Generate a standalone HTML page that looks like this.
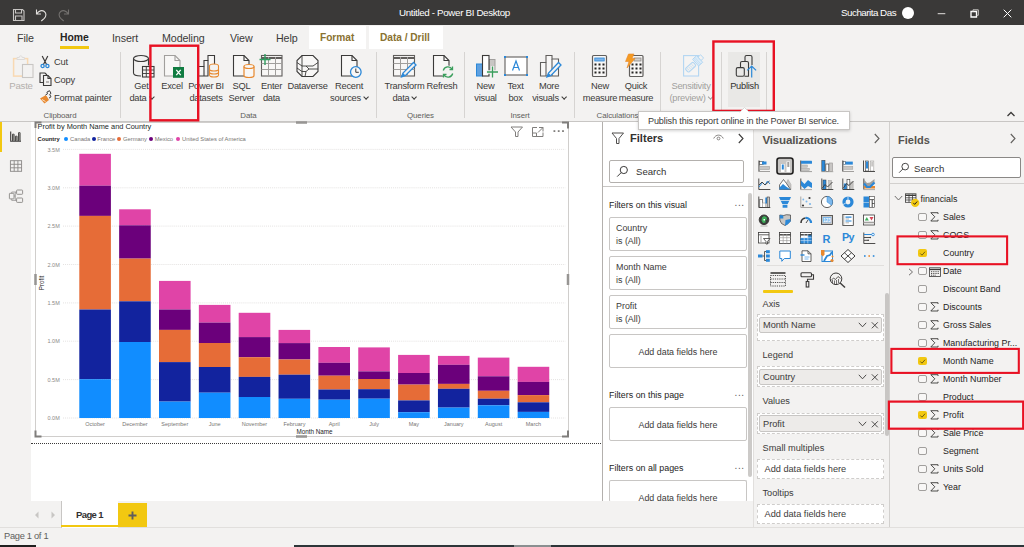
<!DOCTYPE html>
<html><head><meta charset="utf-8">
<style>
*{box-sizing:border-box;margin:0;padding:0}
html,body{width:1024px;height:547px;overflow:hidden;background:#f3f2f1;font-family:"Liberation Sans",sans-serif;color:#252423}
.a{position:absolute}
.t{position:absolute;white-space:nowrap;line-height:1}
svg{position:absolute;overflow:visible}
#title{left:0;top:0;width:1024px;height:25.5px;background:#3a3938}
#ribbon{left:0;top:25px;width:1024px;height:97px;background:#f3f2f1}
.tab{font-size:10.7px;color:#3b3a39;top:32.5px;letter-spacing:-0.1px}
.tabb{font-size:10.2px;font-weight:bold;top:33px;letter-spacing:-0.05px}
.rl{font-size:9.3px;letter-spacing:-0.25px;color:#3b3a39;text-align:center;line-height:12.3px;white-space:nowrap;position:absolute;transform:translateX(-50%);top:80px}
.rs{font-size:9.3px;letter-spacing:-0.2px;color:#3b3a39;position:absolute;white-space:nowrap;line-height:1}
.gl{font-size:7.9px;letter-spacing:-0.1px;color:#605e5c;position:absolute;top:111.700px;transform:translateX(-50%);white-space:nowrap;line-height:1}
.sep{position:absolute;top:52px;width:1px;height:66px;background:#d6d4d2}
.red{position:absolute;border:2.4px solid #e2142d}
.dis{color:#a19f9d}
.chev{display:inline-block;width:4px;height:4px;border-right:1px solid #3b3a39;border-bottom:1px solid #3b3a39;transform:rotate(45deg);margin-left:3px;position:relative;top:-2px}
.xl{top:421.600px;font-size:5.5px;color:#777573;transform:translateX(-50%)}
.yl{left:47.500px;font-size:5.5px;color:#8a8886}
.fh{left:609px;font-size:8.9px;color:#252423}
.fc{position:absolute;left:609px;width:138px;height:34px;border:1px solid #c8c6c4;border-radius:2px;background:#fff;font-size:8.9px;color:#3b3a39;padding:3.5px 0 0 6px;line-height:13.4px;white-space:nowrap}
.fa{position:absolute;left:609px;width:138px;height:34px;border:1px solid #c8c6c4;border-radius:2px;background:#fff;font-size:8.9px;color:#3b3a39;text-align:center;line-height:33px;white-space:nowrap;overflow:hidden}
.wl{left:762.5px;font-size:9.2px;color:#3b3a39}
.fl{font-size:8.85px;color:#252423}
</style></head><body>
<!-- TITLE BAR -->
<div class="a" id="title"></div>
<div class="t" style="left:399px;top:8.400px;font-size:9.800px;letter-spacing:-0.350px;color:#fff">Untitled - Power BI Desktop</div>
<div class="t" style="left:841px;top:8.400px;font-size:9.800px;letter-spacing:-0.500px;color:#fff">Sucharita Das</div>
<div class="a" style="left:902px;top:7px;width:12px;height:12px;border-radius:50%;background:#fff"></div>
<svg style="left:12px;top:8px" width="60" height="14" viewBox="0 0 60 14" fill="none" stroke="#c8c6c4" stroke-width="1.1">
<path d="M1.5 1.5h9l1.500 1.500v9.500h-10.500z"/><path d="M3.500 1.500v3.500h6v-3.500M3.500 12.500v-4.500h6.500v4.500"/>
<path d="M24.500 1.500v4.500h4.500M24.800 5.800c1.800-3 5.200-4 7.500-2.300c2.300 1.800 2 4.800 0 6.800l-3 2.700" stroke="#e1dfdd"/>
<path d="M56.500 1.500v4.500h-4.500M56.200 5.800c-1.800-3-5.200-4-7.500-2.300c-2.300 1.800-2 4.800 0 6.800l3 2.700" stroke="#72706e"/>
</svg>
<svg style="left:0;top:0" width="1024" height="26" viewBox="0 0 1024 26" fill="none" stroke="#fff" stroke-width="1">
<path d="M937.700 13.700h7.600" stroke="#e1dfdd"/>
<path d="M971 11.500h5.500v5.500h-5.500z" stroke-width="1.300"/><path d="M973 11.500v-1.700h5.300v5.500h-1.800" stroke="#c8c6c4"/>
<path d="M1003.700 9.700l7.600 7.600M1011.300 9.700l-7.600 7.600"/>
</svg>
<!-- RIBBON -->
<div class="a" id="ribbon"></div>
<div class="t tab" style="left:17px">File</div>
<div class="t tab" style="left:60px;font-weight:bold;color:#252423;font-size:10.4px;top:33px;letter-spacing:0">Home</div>
<div class="a" style="left:60px;top:46px;width:29px;height:3px;background:#f2c811"></div>
<div class="t tab" style="left:112px">Insert</div>
<div class="t tab" style="left:162px">Modeling</div>
<div class="t tab" style="left:230px">View</div>
<div class="t tab" style="left:276px">Help</div>
<div class="a" style="left:309px;top:26px;width:57px;height:22.500px;background:#fff"></div>
<div class="t tabb" style="left:320px;color:#8a7232">Format</div>
<div class="a" style="left:369px;top:26px;width:74px;height:22.500px;background:#fff"></div>
<div class="t tabb" style="left:380px;color:#8a7232">Data / Drill</div>
<!-- CLIPBOARD -->
<svg style="left:12px;top:54px" width="24" height="26" viewBox="12 54 24 26" fill="none">
<rect x="13.6" y="58.600" width="14" height="17.500" stroke="#f8d9b3" stroke-width="1.5"/>
<path d="M17 59.500v-2h2.200c0-2.200 3-2.200 3 0h2.200v2z" fill="#f3f2f1" stroke="#dddbd9" stroke-width="1"/>
<rect x="22.500" y="64.500" width="10.500" height="13" fill="#f3f2f1" stroke="#c8c6c4" stroke-width="1.100"/>
</svg>
<div class="rl" style="left:21px;color:#b3b0ad;font-size:9.600px">Paste</div>
<!-- cut -->
<svg style="left:40px;top:55px" width="10" height="14" viewBox="0 0 10 14" fill="none">
<path d="M2.200 1l4.600 9M7.800 1l-4.600 9" stroke="#3b3a39" stroke-width="1.200"/>
<circle cx="2.600" cy="11" r="1.600" stroke="#2b88d8" stroke-width="1.300"/><circle cx="7.400" cy="11" r="1.600" stroke="#2b88d8" stroke-width="1.300"/>
</svg>
<div class="rs" style="left:54px;top:58px">Cut</div>
<!-- copy -->
<svg style="left:39px;top:72px" width="13" height="14" viewBox="0 0 13 14" fill="none" stroke="#3b3a39" stroke-width="1.100">
<path d="M4.500 10.500h-3.500v-9.500h5l2 2"/>
<path d="M4.500 3.500h4.500l3 3v7h-7.500z" fill="#f3f2f1"/><path d="M9 3.500v3h3" /><path d="M7 10h3" stroke="#8a8886"/>
</svg>
<div class="rs" style="left:54px;top:76px">Copy</div>
<!-- format painter -->
<svg style="left:39px;top:90px" width="13" height="14" viewBox="0 0 13 14" fill="none">
<path d="M1 8.500l6-3.500l3 5l-4.500 3.500z" fill="#e8892f"/>
<path d="M3 9.500l3.500 2" stroke="#fbe3c8" stroke-width="1"/>
<path d="M6.500 5l2-1.200l-.6-1.600l2.600-1.500l1.500 2.600l-1.300 1.100l1.300 2.400l-2 1.300" stroke="#3b3a39" stroke-width="1" fill="#f3f2f1"/>
</svg>
<div class="rs" style="left:54px;top:94px">Format painter</div>
<div class="gl" style="left:60px">Clipboard</div>
<div class="sep" style="left:120px"></div>
<!-- GET DATA -->
<svg style="left:132px;top:54px" width="24" height="25" viewBox="132 54 24 25" fill="none" stroke="#3b3a39" stroke-width="1.100">
<ellipse cx="141" cy="58.500" rx="7.500" ry="3"/>
<path d="M133.500 58.500v14.500c0 1.700 3.400 3 7.500 3M148.500 58.500v7"/>
<rect x="142.500" y="66.500" width="11.500" height="10.500" fill="#f3f2f1"/>
<path d="M142.500 70h11.500M142.500 73.500h11.500M146.300 66.500v10.500M150.200 66.500v10.500" stroke-width="0.900"/>
</svg>
<div class="rl" style="left:141.500px">Get<br>data<span class="chev"></span></div>
<!-- EXCEL -->
<svg style="left:163px;top:54px" width="24" height="25" viewBox="163 54 24 25" fill="none">
<path d="M164.500 55.500h10.500l5 5v15.500h-15.500z" stroke="#a19f9d" stroke-width="1.100" fill="#f8f7f6"/>
<path d="M175 55.500v5h5" stroke="#a19f9d" stroke-width="1.100"/>
<rect x="173" y="67" width="11" height="10.800" fill="#107c41"/>
<path d="M176.300 69.800l4.400 5.400M180.700 69.800l-4.400 5.400" stroke="#fff" stroke-width="1.300"/>
</svg>
<div class="rl" style="left:172px">Excel</div>
<!-- POWER BI DATASETS -->
<svg style="left:197px;top:54px" width="24" height="25" viewBox="197 54 24 25" fill="none">
<path d="M198.500 76v-9.500h5.500v-6h4v-5h6.500v10" stroke="#3b3a39" stroke-width="1.100" fill="#f8f7f6"/>
<path d="M204 66.500v9.500M208 60.500v15.500M198.500 76h10" stroke="#3b3a39" stroke-width="1.100"/>
<ellipse cx="214" cy="66" rx="4.500" ry="2" stroke="#e8892f" stroke-width="1.100" fill="#f3f2f1"/>
<path d="M209.500 66v9c0 1.200 2 2 4.500 2s4.500-.8 4.500-2v-9" stroke="#e8892f" stroke-width="1.100" fill="#f3f2f1"/>
<path d="M209.500 69c0 1.200 2 2 4.500 2s4.500-.8 4.500-2M209.500 72c0 1.200 2 2 4.500 2s4.500-.8 4.500-2" stroke="#e8892f" stroke-width="1.100"/>
</svg>
<div class="rl" style="left:206px">Power BI<br>datasets</div>
<!-- SQL SERVER -->
<svg style="left:232px;top:54px" width="24" height="25" viewBox="232 54 24 25" fill="none">
<path d="M233.500 55.500h10.500l5 5v15.500h-15.500z" stroke="#3b3a39" stroke-width="1.100" fill="#f8f7f6"/>
<path d="M244 55.500v5h5" stroke="#3b3a39" stroke-width="1.100"/>
<path d="M244 66.500v9c0 1.200 2.200 2 5 2s5-.8 5-2v-9" stroke="#e8892f" stroke-width="1.200" fill="#f8f7f6"/>
<ellipse cx="249" cy="66.500" rx="5" ry="2" stroke="#e8892f" stroke-width="1.200" fill="#f8f7f6"/>
</svg>
<div class="rl" style="left:241.500px">SQL<br>Server</div>
<!-- ENTER DATA -->
<svg style="left:258px;top:53px" width="26" height="25" viewBox="258 53 26 25" fill="none">
<rect x="261.500" y="55.500" width="20.500" height="20.500" stroke="#605e5c" stroke-width="1.100" fill="#f8f7f6"/>
<path d="M261.500 58h20.500" stroke="#605e5c" stroke-width="2"/>
<path d="M261.500 63.500h20.500M261.500 69.500h20.500M268.500 57v19M275.500 57v19" stroke="#a19f9d" stroke-width="1"/>
<path d="M265 54v11M259.500 59.500h11" stroke="#2f9e60" stroke-width="1.400"/>
</svg>
<div class="rl" style="left:271.500px">Enter<br>data</div>
<!-- DATAVERSE -->
<svg style="left:296px;top:54px" width="24" height="25" viewBox="296 54 24 25" fill="none" stroke="#3b3a39" stroke-width="1.100">
<path d="M302 55.500h11l5 5v11l-5 5h-11l-5-5v-11z" fill="#f8f7f6"/>
<path d="M297 62.500l5 3.500h11l5-3.500M297 68l5 3.500h4l3-2.500h9M302 55.500v21M306 71.500l-1 5M309 69l-3-3" stroke-width="0.900"/>
</svg>
<div class="rl" style="left:307.500px">Dataverse</div>
<!-- RECENT SOURCES -->
<svg style="left:340px;top:54px" width="24" height="25" viewBox="340 54 24 25" fill="none">
<path d="M341.500 55.500h10.500l5 5v15.500h-15.500z" stroke="#3b3a39" stroke-width="1.100" fill="#f8f7f6"/>
<path d="M352 55.500v5h5" stroke="#3b3a39" stroke-width="1.100"/>
<circle cx="355.800" cy="72" r="5.300" fill="#f8f7f6" stroke="#2b88d8" stroke-width="1.300"/>
<path d="M355.800 68.500v3.800h3" stroke="#3b3a39" stroke-width="1"/>
</svg>
<div class="rl" style="left:349px">Recent<br>sources<span class="chev"></span></div>
<div class="gl" style="left:248.500px">Data</div>
<div class="sep" style="left:376px"></div>
<!-- TRANSFORM DATA -->
<svg style="left:392px;top:54px" width="26" height="25" viewBox="392 54 26 25" fill="none">
<rect x="393.500" y="55.500" width="21" height="20.500" stroke="#605e5c" stroke-width="1.100" fill="#f8f7f6"/>
<path d="M393.500 58h21" stroke="#605e5c" stroke-width="2"/>
<path d="M393.500 63.500h21M393.500 69.500h21M400.500 57v19M407.500 57v19" stroke="#a19f9d" stroke-width="1"/>
<path d="M413.500 62.500l2.500 2.500l-10.500 10.500l-4 1.500l1.500-4z" fill="#f3f2f1" stroke="#2b88d8" stroke-width="1.300"/>
<path d="M401.500 77l1.500-4l2.500 2.500z" fill="#2b88d8"/>
</svg>
<div class="rl" style="left:404.500px">Transform<br>data<span class="chev"></span></div>
<!-- REFRESH -->
<svg style="left:432px;top:54px" width="24" height="25" viewBox="432 54 24 25" fill="none">
<path d="M433.500 55.500h10.500l5 5v15.500h-15.500z" stroke="#3b3a39" stroke-width="1.100" fill="#f8f7f6"/>
<path d="M444 55.500v5h5" stroke="#3b3a39" stroke-width="1.100"/>
<circle cx="448" cy="72" r="6.500" fill="#f3f2f1" stroke="none"/>
<path d="M443.300 70.500a4.800 4.800 0 0 1 8.800-1.300M452.700 73.500a4.800 4.800 0 0 1-8.800 1.300" stroke="#3a9e5c" stroke-width="1.300"/>
<path d="M452.500 66.500v3h-3M443.500 77.500v-3h3" stroke="#3a9e5c" stroke-width="1.300"/>
</svg>
<div class="rl" style="left:442px">Refresh</div>
<div class="gl" style="left:420.500px">Queries</div>
<div class="sep" style="left:464px"></div>
<!-- NEW VISUAL -->
<svg style="left:475px;top:54px" width="26" height="25" viewBox="475 54 26 25" fill="none">
<rect x="489" y="59.500" width="6" height="12.500" fill="#c8c6c4" stroke="#a19f9d" stroke-width="1"/>
<rect x="476.500" y="64" width="6" height="12" fill="#5ea0e0" stroke="#2b88d8" stroke-width="1"/>
<rect x="482.500" y="55.500" width="6.500" height="20.500" fill="#fff" stroke="#3b3a39" stroke-width="1.100"/>
<path d="M492.500 66v12M486.500 72h12" stroke="#f3f2f1" stroke-width="3.500"/>
<path d="M492.500 66.500v11M487 72h11" stroke="#3a9e5c" stroke-width="1.300"/>
</svg>
<div class="rl" style="left:485.500px">New<br>visual</div>
<!-- TEXT BOX -->
<svg style="left:503px;top:55px" width="26" height="22" viewBox="503 55 26 22" fill="none">
<rect x="505" y="57" width="22" height="18" fill="#fff" stroke="#605e5c" stroke-width="1.100"/>
<path d="M512.500 70.500l3.500-9.500l3.500 9.500M513.700 67.500h4.600" stroke="#2b88d8" stroke-width="1.200"/>
<g fill="#2b88d8"><rect x="504" y="56" width="2" height="2"/><rect x="526" y="56" width="2" height="2"/><rect x="504" y="74" width="2" height="2"/><rect x="526" y="74" width="2" height="2"/></g>
</svg>
<div class="rl" style="left:515.500px">Text<br>box</div>
<!-- MORE VISUALS -->
<svg style="left:539px;top:54px" width="26" height="25" viewBox="539 54 26 25" fill="none">
<path d="M540.500 76v-13.500h5.500v-7h6v3.500h6.500v17z" fill="#f8f7f6" stroke="#605e5c" stroke-width="1.100"/>
<path d="M546 62.500v13.500M552 59v17" stroke="#605e5c" stroke-width="1.100"/>
<path d="M558.500 62.500l2.500 2.500l-10 10.500l-4 1.500l1.500-4z" fill="#f3f2f1" stroke="#2b88d8" stroke-width="1.300"/>
<path d="M547 77l1.500-4l2.500 2.500z" fill="#2b88d8"/>
</svg>
<div class="rl" style="left:549px">More<br>visuals<span class="chev"></span></div>
<div class="gl" style="left:520px">Insert</div>
<div class="sep" style="left:574px"></div>
<!-- NEW MEASURE -->
<svg style="left:591px;top:54px" width="18" height="24" viewBox="591 54 18 24" fill="none">
<rect x="592.500" y="55.500" width="14" height="21" rx="1" fill="#f8f7f6" stroke="#605e5c" stroke-width="1.200"/>
<rect x="594.800" y="58" width="9.400" height="3" fill="#7db4ea" stroke="#2b88d8" stroke-width="0.800"/>
<g fill="#252423"><rect x="594.500" y="63.500" width="2" height="2"/><rect x="598.500" y="63.500" width="2" height="2"/><rect x="602.500" y="63.500" width="2" height="2"/>
<rect x="594.500" y="67.500" width="2" height="2"/><rect x="598.500" y="67.500" width="2" height="2"/><rect x="602.500" y="67.500" width="2" height="2"/>
<rect x="594.500" y="71.500" width="2" height="2"/><rect x="598.500" y="71.500" width="2" height="2"/><rect x="602.500" y="71.500" width="2" height="2"/></g>
</svg>
<div class="rl" style="left:600px">New<br>measure</div>
<!-- QUICK MEASURE -->
<svg style="left:623px;top:53px" width="22" height="25" viewBox="623 53 22 25" fill="none">
<rect x="629.500" y="55.500" width="13.500" height="21" rx="1" fill="#f8f7f6" stroke="#605e5c" stroke-width="1.200"/>
<rect x="634" y="58" width="7" height="3" fill="#d2d0ce" stroke="#8a8886" stroke-width="0.800"/>
<g fill="#252423"><rect x="631.500" y="63.500" width="2" height="2"/><rect x="635.500" y="63.500" width="2" height="2"/><rect x="639.500" y="63.500" width="2" height="2"/>
<rect x="631.500" y="67.500" width="2" height="2"/><rect x="635.500" y="67.500" width="2" height="2"/><rect x="639.500" y="67.500" width="2" height="2"/>
<rect x="631.500" y="71.500" width="2" height="2"/><rect x="635.500" y="71.500" width="2" height="2"/><rect x="639.500" y="71.500" width="2" height="2"/></g>
<path d="M628.500 54h5.500l-2 4.500h3l-8 9.500l2-6.500h-3.500z" fill="#f59b23" stroke="#e8892f" stroke-width="0.600"/>
</svg>
<div class="rl" style="left:636px">Quick<br>measure</div>
<div class="gl" style="left:617.500px">Calculations</div>
<div class="sep" style="left:660px"></div>
<!-- SENSITIVITY -->
<svg style="left:682px;top:53px" width="24" height="25" viewBox="682 53 24 25" fill="none" stroke="#b2d6f2" stroke-width="1.100">
<rect x="683.600" y="55.600" width="15" height="20.400" fill="#f5f4f3"/>
<g transform="rotate(-42 693 65)">
<rect x="684.500" y="62.500" width="10.500" height="5" rx="1.500" fill="#f3f2f1"/><path d="M686.500 63.500v3M688.500 63.500v3M690.500 63.500v3M692.500 63.500v3" stroke-width="0.600"/>
<rect x="696.500" y="60.500" width="5.500" height="9" fill="#dcecf8" stroke-width="0.900"/><path d="M698 60.500v9M699.500 60.500v9" stroke-width="0.500"/>
<rect x="702" y="62.500" width="3.500" height="4.500" fill="#f3f2f1" stroke-width="0.900"/>
</g>
</svg>
<div class="rl dis" style="left:691px">Sensitivity<br>(preview)<span class="chev" style="border-color:#a19f9d"></span></div>
<div class="sep" style="left:721px"></div>
<div class="sep" style="left:766px"></div>
<!-- PUBLISH -->
<div class="a" style="left:728px;top:52px;width:32px;height:55px;background:#e9e8e6"></div>
<svg style="left:734px;top:54px" width="24" height="25" viewBox="734 54 24 25" fill="none">
<path d="M745 61.500v-4.500a1.500 1.500 0 0 1 1.500-1.500h4a1.500 1.500 0 0 1 1.500 1.500v8" stroke="#3b3a39" stroke-width="1.100"/>
<path d="M740.500 67.500v-4.500a1.500 1.500 0 0 1 1.500-1.500h5a1.500 1.500 0 0 1 1.500 1.500v13.200h-4" stroke="#3b3a39" stroke-width="1.100"/>
<rect x="736.300" y="67.600" width="8" height="8.600" rx="1.500" stroke="#3b3a39" stroke-width="1.100"/>
<path d="M751.700 77.500v-11.300M747.300 70.400l4.400-4.400l4.400 4.400" stroke="#2b88d8" stroke-width="1.200"/>
</svg>
<div class="rl" style="left:744.500px;color:#323130">Publish</div>
<!-- collapse chevron -->
<svg style="left:1006px;top:110px" width="10" height="8" viewBox="0 0 10 8" fill="none" stroke="#3b3a39" stroke-width="1.300"><path d="M1.500 6l3.500-3.500l3.500 3.500"/></svg>
<!-- LEFT NAV + CANVAS -->
<div class="a" style="left:0;top:122px;width:31px;height:406px;background:#f3f2f1"></div>
<div class="a" style="left:31px;top:122px;width:572px;height:379px;background:#fff"></div>
<div class="a" style="left:0;top:121px;width:1024px;height:1px;background:#c8c6c4"></div>
<div class="a" style="left:0;top:122px;width:2px;height:29.500px;background:#f2c811"></div>
<svg style="left:0;top:0" width="32" height="212" viewBox="0 0 32 212" fill="none" stroke="#3b3a39" stroke-width="1">
<path d="M10.700 131.500v9.700h10.300" stroke-width="1.100"/><path d="M12.500 141v-6.800h1.600v6.800M15.500 141v-4.800h1.600v4.800M18.500 141v-8.300h1.600v8.300" stroke-width="0.900"/><path d="M13.300 135v5.500M16.300 137v3.500M19.300 133.500v7" stroke="#605e5c" stroke-width="0.800"/>
<g stroke="#8a8886" stroke-width="0.900"><rect x="10.400" y="160.700" width="11.200" height="10.600"/><path d="M10.400 164.300h11.200M10.400 167.800h11.200M14.200 160.700v10.600M17.900 160.700v10.600"/>
<rect x="9.400" y="193.300" width="4.600" height="5.600" rx="0.500"/><rect x="16.600" y="190" width="6" height="4.300" rx="0.700"/><rect x="16.600" y="198" width="6" height="4.400" rx="0.700"/>
<path d="M11.700 193.300v-1.300h4.900M11.700 198.900v1.500h4.900M14 196h1.300v-4M15.300 196v4.400" stroke-width="0.700"/></g>
</svg>
<div class="a" style="left:35px;top:122px;width:533.500px;height:315px;border:1px solid #d0cecc"></div>
<svg style="left:0;top:0" width="1024" height="547" viewBox="0 0 1024 547" fill="none" stroke="#8a8886" stroke-width="2">
<path d="M35.500 128v-5.500h6M562 122.500h6v6M35.500 430.500v6h6M562 436.500h6v-6" stroke="#807e7c"/>
<path d="M296 122.500h11M296 436.500h11M35.500 274v11M568 274v11" stroke="#979593" stroke-width="2.500"/>
</svg>
<div class="a" style="left:31px;top:442.500px;width:572px;height:0;border-top:1.500px dotted #3b3a39"></div>
<svg style="left:0;top:0" width="1024" height="547" viewBox="0 0 1024 547"><path d="M63 149.4H565.500" stroke="#dddbd9" stroke-width="0.800" stroke-dasharray="1 1.050"/><path d="M63 187.8H565.500" stroke="#dddbd9" stroke-width="0.800" stroke-dasharray="1 1.050"/><path d="M63 226.1H565.500" stroke="#dddbd9" stroke-width="0.800" stroke-dasharray="1 1.050"/><path d="M63 264.5H565.500" stroke="#dddbd9" stroke-width="0.800" stroke-dasharray="1 1.050"/><path d="M63 302.9H565.500" stroke="#dddbd9" stroke-width="0.800" stroke-dasharray="1 1.050"/><path d="M63 341.2H565.500" stroke="#dddbd9" stroke-width="0.800" stroke-dasharray="1 1.050"/><path d="M63 379.6H565.500" stroke="#dddbd9" stroke-width="0.800" stroke-dasharray="1 1.050"/><path d="M63 418.0H565.500" stroke="#dddbd9" stroke-width="0.800" stroke-dasharray="1 1.050"/><rect x="79.30" y="153.80" width="31.6" height="31.90" fill="#e044a7"/><rect x="79.30" y="185.70" width="31.6" height="30.20" fill="#6b007b"/><rect x="79.30" y="215.90" width="31.6" height="93.60" fill="#e66c37"/><rect x="79.30" y="309.50" width="31.6" height="69.70" fill="#12239e"/><rect x="79.30" y="379.20" width="31.6" height="38.80" fill="#118dff"/><rect x="119.15" y="209.30" width="31.6" height="16.00" fill="#e044a7"/><rect x="119.15" y="225.30" width="31.6" height="33.30" fill="#6b007b"/><rect x="119.15" y="258.60" width="31.6" height="42.70" fill="#e66c37"/><rect x="119.15" y="301.30" width="31.6" height="40.70" fill="#12239e"/><rect x="119.15" y="342.00" width="31.6" height="76.00" fill="#118dff"/><rect x="159.00" y="280.90" width="31.6" height="28.60" fill="#e044a7"/><rect x="159.00" y="309.50" width="31.6" height="20.40" fill="#6b007b"/><rect x="159.00" y="329.90" width="31.6" height="32.20" fill="#e66c37"/><rect x="159.00" y="362.10" width="31.6" height="39.50" fill="#12239e"/><rect x="159.00" y="401.60" width="31.6" height="16.40" fill="#118dff"/><rect x="198.85" y="304.90" width="31.6" height="17.70" fill="#e044a7"/><rect x="198.85" y="322.60" width="31.6" height="20.40" fill="#6b007b"/><rect x="198.85" y="343.00" width="31.6" height="24.00" fill="#e66c37"/><rect x="198.85" y="367.00" width="31.6" height="25.70" fill="#12239e"/><rect x="198.85" y="392.70" width="31.6" height="25.30" fill="#118dff"/><rect x="238.70" y="312.80" width="31.6" height="24.30" fill="#e044a7"/><rect x="238.70" y="337.10" width="31.6" height="20.10" fill="#6b007b"/><rect x="238.70" y="357.20" width="31.6" height="19.70" fill="#e66c37"/><rect x="238.70" y="376.90" width="31.6" height="20.10" fill="#12239e"/><rect x="238.70" y="397.00" width="31.6" height="21.00" fill="#118dff"/><rect x="278.55" y="329.90" width="31.6" height="13.20" fill="#e044a7"/><rect x="278.55" y="343.10" width="31.6" height="16.40" fill="#6b007b"/><rect x="278.55" y="359.50" width="31.6" height="15.20" fill="#e66c37"/><rect x="278.55" y="374.70" width="31.6" height="24.10" fill="#12239e"/><rect x="278.55" y="398.80" width="31.6" height="19.20" fill="#118dff"/><rect x="318.40" y="347.00" width="31.6" height="15.80" fill="#e044a7"/><rect x="318.40" y="362.80" width="31.6" height="12.90" fill="#6b007b"/><rect x="318.40" y="375.70" width="31.6" height="13.80" fill="#e66c37"/><rect x="318.40" y="389.50" width="31.6" height="10.20" fill="#12239e"/><rect x="318.40" y="399.70" width="31.6" height="18.30" fill="#118dff"/><rect x="358.25" y="347.40" width="31.6" height="24.00" fill="#e044a7"/><rect x="358.25" y="371.40" width="31.6" height="7.60" fill="#6b007b"/><rect x="358.25" y="379.00" width="31.6" height="10.20" fill="#e66c37"/><rect x="358.25" y="389.20" width="31.6" height="9.50" fill="#12239e"/><rect x="358.25" y="398.70" width="31.6" height="19.30" fill="#118dff"/><rect x="398.10" y="354.90" width="31.6" height="18.10" fill="#e044a7"/><rect x="398.10" y="373.00" width="31.6" height="11.60" fill="#6b007b"/><rect x="398.10" y="384.60" width="31.6" height="15.80" fill="#e66c37"/><rect x="398.10" y="400.40" width="31.6" height="11.80" fill="#12239e"/><rect x="398.10" y="412.20" width="31.6" height="5.80" fill="#118dff"/><rect x="437.95" y="355.90" width="31.6" height="8.90" fill="#e044a7"/><rect x="437.95" y="364.80" width="31.6" height="19.10" fill="#6b007b"/><rect x="437.95" y="383.90" width="31.6" height="4.90" fill="#e66c37"/><rect x="437.95" y="388.80" width="31.6" height="18.80" fill="#12239e"/><rect x="437.95" y="407.60" width="31.6" height="10.40" fill="#118dff"/><rect x="477.80" y="357.60" width="31.6" height="18.70" fill="#e044a7"/><rect x="477.80" y="376.30" width="31.6" height="14.50" fill="#6b007b"/><rect x="477.80" y="390.80" width="31.6" height="7.90" fill="#e66c37"/><rect x="477.80" y="398.70" width="31.6" height="6.60" fill="#12239e"/><rect x="477.80" y="405.30" width="31.6" height="12.70" fill="#118dff"/><rect x="517.65" y="366.80" width="31.6" height="15.10" fill="#e044a7"/><rect x="517.65" y="381.90" width="31.6" height="13.20" fill="#6b007b"/><rect x="517.65" y="395.10" width="31.6" height="7.20" fill="#e66c37"/><rect x="517.65" y="402.30" width="31.6" height="9.60" fill="#12239e"/><rect x="517.65" y="411.90" width="31.6" height="6.10" fill="#118dff"/></svg>
<div class="t xl" style="left:95.1px">October</div>
<div class="t xl" style="left:135.0px">December</div>
<div class="t xl" style="left:174.8px">September</div>
<div class="t xl" style="left:214.7px">June</div>
<div class="t xl" style="left:254.5px">November</div>
<div class="t xl" style="left:294.4px">February</div>
<div class="t xl" style="left:334.2px">April</div>
<div class="t xl" style="left:374.1px">July</div>
<div class="t xl" style="left:413.9px">May</div>
<div class="t xl" style="left:453.8px">January</div>
<div class="t xl" style="left:493.6px">August</div>
<div class="t xl" style="left:533.4px">March</div>
<div class="t yl" style="top:147.6px">3.5M</div>
<div class="t yl" style="top:186.0px">3.0M</div>
<div class="t yl" style="top:224.3px">2.5M</div>
<div class="t yl" style="top:262.7px">2.0M</div>
<div class="t yl" style="top:301.1px">1.5M</div>
<div class="t yl" style="top:339.4px">1.0M</div>
<div class="t yl" style="top:377.8px">0.5M</div>
<div class="t yl" style="top:416.2px">0.0M</div>
<div class="t" style="left:37.500px;top:123px;font-size:7.400px;color:#201f1e">Profit by Month Name and Country</div>
<div class="t" style="left:37.500px;top:136.500px;font-size:5.800px;font-weight:bold;color:#252423">Country</div>
<div class="a" style="left:64.0px;top:136.5px;width:4.400px;height:4.400px;border-radius:50%;background:#118dff"></div>
<div class="t" style="left:70px;top:136.500px;font-size:5.800px;color:#777573">Canada</div>
<div class="a" style="left:91.8px;top:136.5px;width:4.400px;height:4.400px;border-radius:50%;background:#12239e"></div>
<div class="t" style="left:97.3px;top:136.500px;font-size:5.800px;color:#777573">France</div>
<div class="a" style="left:117.0px;top:136.5px;width:4.400px;height:4.400px;border-radius:50%;background:#e66c37"></div>
<div class="t" style="left:123px;top:136.500px;font-size:5.800px;color:#777573">Germany</div>
<div class="a" style="left:149.0px;top:136.5px;width:4.400px;height:4.400px;border-radius:50%;background:#6b007b"></div>
<div class="t" style="left:154.7px;top:136.500px;font-size:5.800px;color:#777573">Mexico</div>
<div class="a" style="left:175.8px;top:136.5px;width:4.400px;height:4.400px;border-radius:50%;background:#e044a7"></div>
<div class="t" style="left:182px;top:136.500px;font-size:5.800px;color:#777573">United States of America</div>
<div class="t" style="left:314.500px;top:428.500px;font-size:6.300px;color:#252423;transform:translateX(-50%)">Month Name</div>
<div class="t" style="left:41.500px;top:283px;font-size:6.300px;color:#252423;transform:translate(-50%,-50%) rotate(-90deg)">Profit</div>
<svg style="left:509px;top:125px" width="58" height="13" viewBox="509 125 58 13" fill="none" stroke="#807e7c" stroke-width="1">
<path d="M511 127h11.500l-4.500 5v4.500h-2.500v-4.500z"/>
<path d="M537 127.500h-4.500v9h10.500v-4M532.500 133h4v3.500M539 127.500h4v4M543 127.500l-5 5"/>
<g fill="#807e7c" stroke="none"><rect x="553.500" y="130.200" width="1.800" height="1.800"/><rect x="557.800" y="130.200" width="1.800" height="1.800"/><rect x="562.100" y="130.200" width="1.800" height="1.800"/></g>
</svg>
<!-- FILTERS PANE -->
<div class="a" style="left:603px;top:122px;width:150px;height:379px;background:#fff"></div>
<div class="a" style="left:602px;top:122px;width:1px;height:379px;background:#b3b0ad"></div>
<svg style="left:611px;top:132px" width="14" height="13" viewBox="0 0 14 13" fill="none" stroke="#484644" stroke-width="0.950"><path d="M1 1h11.500l-4.500 5.500v5h-2.500v-5z"/></svg>
<div class="t" style="left:630px;top:133px;font-size:11.100px;font-weight:bold;color:#323130">Filters</div>
<svg style="left:713px;top:134px" width="11" height="8" viewBox="0 0 11 8" fill="none" stroke="#7a7876" stroke-width="0.900"><path d="M0.700 4.500c2-4.500 7.600-4.500 9.600 0"/><circle cx="5.500" cy="4.500" r="1.400"/></svg>
<svg style="left:737px;top:133px" width="8" height="11" viewBox="0 0 8 11" fill="none" stroke="#3b3a39" stroke-width="1.100"><path d="M1.800 1l4.200 4.500l-4.200 4.500"/></svg>
<div class="a" style="left:609px;top:160px;width:135px;height:23px;border:1px solid #b3b0ad;border-radius:2px;background:#fff"></div>
<svg style="left:616px;top:165px" width="13" height="13" viewBox="0 0 13 13" fill="none" stroke="#3b3a39" stroke-width="1"><circle cx="7.800" cy="5" r="3.600"/><path d="M5.200 7.600l-4 4"/></svg>
<div class="t" style="left:636px;top:166.700px;font-size:9.600px;color:#323130">Search</div>
<div class="a" style="left:603px;top:186px;width:150px;height:1px;background:#c8c6c4"></div>
<div class="a" style="left:748.300px;top:193px;width:4.200px;height:284px;background:#cccac8;border-radius:2px"></div>
<div class="t fh" style="top:200.500px">Filters on this visual</div>
<div class="t" style="left:734.500px;top:198px;font-size:10px;color:#605e5c;letter-spacing:0.600px">...</div>
<div class="fc" style="top:217px"><div>Country</div><div>is (All)</div></div>
<div class="fc" style="top:256px"><div>Month Name</div><div>is (All)</div></div>
<div class="fc" style="top:295px"><div>Profit</div><div>is (All)</div></div>
<div class="fa" style="top:334px;line-height:35px">Add data fields here</div>
<div class="t fh" style="top:390.500px">Filters on this page</div>
<div class="t" style="left:734.500px;top:388px;font-size:10px;color:#605e5c;letter-spacing:0.600px">...</div>
<div class="fa" style="top:407px;line-height:34.500px">Add data fields here</div>
<div class="t fh" style="top:463.800px">Filters on all pages</div>
<div class="t" style="left:734.500px;top:460.500px;font-size:10px;color:#605e5c;letter-spacing:0.600px">...</div>
<div class="fa" style="top:479.500px;height:22px;border-bottom:none;line-height:34.500px">Add data fields here</div>
<!-- VIZ PANE -->
<div class="a" style="left:753px;top:122px;width:136px;height:406px;background:#f3f2f1"></div>
<div class="a" style="left:753px;top:122px;width:1px;height:406px;background:#e1dfdd"></div>
<div class="t" style="left:762.500px;top:133.500px;font-size:11.600px;font-weight:bold;color:#55524f;letter-spacing:-0.200px">Visualizations</div>
<svg style="left:873px;top:133px" width="8" height="11" viewBox="0 0 8 11" fill="none" stroke="#605e5c" stroke-width="1.100"><path d="M1.800 1l4.200 4.500l-4.200 4.500"/></svg>
<svg style="left:757.9px;top:160.2px" width="12" height="12" viewBox="0 0 12 12"><path d="M1 0.500v11" stroke="#3b3a39" stroke-width="1"/><rect x="1.500" y="1.500" width="4" height="3" fill="#fff" stroke="#3b3a39" stroke-width="0.600"/><rect x="4" y="1.500" width="4.500" height="3" fill="#2b88d8"/><rect x="1.500" y="6.500" width="10" height="3" fill="#c8c6c4" stroke="#a19f9d" stroke-width="0.600"/><path d="M0.500 11.500h11.500" stroke="#a19f9d" stroke-width="1"/></svg>
<svg style="left:778.9px;top:160.2px" width="12" height="12" viewBox="0 0 12 12"><rect x="-2" y="-2" width="16" height="16" rx="2.500" fill="#c8c6c4" stroke="#201f1e" stroke-width="1.600"/><rect x="2" y="4" width="3.500" height="8" fill="#fff"/><rect x="2.800" y="4.500" width="2" height="5" fill="#2b88d8"/><rect x="7.500" y="1.500" width="3.500" height="10.500" fill="#fff"/><rect x="8.300" y="2" width="2" height="5" fill="#a19f9d"/></svg>
<svg style="left:799.8px;top:160.2px" width="12" height="12" viewBox="0 0 12 12"><path d="M0.800 0.500v11" stroke="#3b3a39" stroke-width="1"/><rect x="1" y="0.800" width="11" height="3" rx="0.500" fill="#2b88d8"/><rect x="1.300" y="5" width="6" height="2.200" fill="#c8c6c4" stroke="#a19f9d" stroke-width="0.500"/><rect x="1.300" y="8.300" width="8" height="2.200" fill="#c8c6c4" stroke="#a19f9d" stroke-width="0.500"/><path d="M0.500 11.600h11.500" stroke="#a19f9d" stroke-width="1"/></svg>
<svg style="left:820.8px;top:160.2px" width="12" height="12" viewBox="0 0 12 12"><rect x="0.800" y="0.300" width="3.200" height="11.200" fill="#2b88d8" stroke="#3b3a39" stroke-width="0.500"/><rect x="4.800" y="4" width="3" height="7.500" fill="#fff" stroke="#3b3a39" stroke-width="0.700"/><rect x="8.600" y="3" width="3" height="8.500" fill="#c8c6c4" stroke="#a19f9d" stroke-width="0.700"/><path d="M0.300 11.700h12" stroke="#a19f9d" stroke-width="0.800"/></svg>
<svg style="left:841.7px;top:160.2px" width="12" height="12" viewBox="0 0 12 12"><path d="M0.800 0.500v11" stroke="#3b3a39" stroke-width="1"/><rect x="1.300" y="1.600" width="9.500" height="3" fill="#2b88d8"/><rect x="1.300" y="1.600" width="2" height="3" fill="#fff" stroke="#3b3a39" stroke-width="0.400"/><rect x="1.300" y="6.300" width="9.500" height="3" fill="#c8c6c4" stroke="#a19f9d" stroke-width="0.500"/><path d="M0.500 11.500h11.500" stroke="#a19f9d" stroke-width="1"/></svg>
<svg style="left:862.6px;top:160.2px" width="12" height="12" viewBox="0 0 12 12"><rect x="2.300" y="1" width="3.300" height="10" fill="#fff" stroke="#3b3a39" stroke-width="0.600"/><rect x="3" y="1.500" width="2" height="7" fill="#2b88d8"/><rect x="7.500" y="1" width="3.300" height="10" fill="#fff" stroke="#a19f9d" stroke-width="0.600"/><rect x="8.200" y="1.500" width="2" height="5" fill="#c8c6c4"/><path d="M0.500 0.500v11h11.500" stroke="#3b3a39" stroke-width="0.900" fill="none"/></svg>
<svg style="left:757.9px;top:178.4px" width="12" height="12" viewBox="0 0 12 12"><path d="M0.800 0.500v11h11.500" stroke="#3b3a39" stroke-width="0.900" fill="none"/><path d="M1 9l3.500-4.500l2.500 2.500l2.500-4l2.500 3" stroke="#2b88d8" stroke-width="1" fill="none"/><path d="M1 7l3-3l3 3l4.500-4" stroke="#3b3a39" stroke-width="0.900" fill="none"/></svg>
<svg style="left:778.9px;top:178.4px" width="12" height="12" viewBox="0 0 12 12"><path d="M5 11.500l4-10l3 5v5z" fill="#c8c6c4" stroke="#a19f9d" stroke-width="0.500"/><path d="M0.500 11.500v-4.500l4-5.500l3 4l4 6z" fill="#fff" stroke="#3b3a39" stroke-width="0.700"/><path d="M0.500 11.500v-2l3.500-3.500l3 2.500l4.500 3z" fill="#2b88d8"/></svg>
<svg style="left:799.8px;top:178.4px" width="12" height="12" viewBox="0 0 12 12"><path d="M0.800 0.500v11" stroke="#3b3a39" stroke-width="0.900"/><path d="M1 2.500l3.500 3.500l3.500-4l4 3v5l-4-2l-3.500 3l-3.500-3.500z" fill="#2b88d8"/><path d="M0.500 11.600h11.500" stroke="#a19f9d" stroke-width="0.900"/></svg>
<svg style="left:820.8px;top:178.4px" width="12" height="12" viewBox="0 0 12 12"><rect x="2" y="2" width="3" height="9.500" fill="#2b88d8" stroke="#3b3a39" stroke-width="0.500"/><rect x="7.500" y="2.500" width="3" height="9" fill="#c8c6c4" stroke="#a19f9d" stroke-width="0.500"/><path d="M0.800 0.500v11h11.500" stroke="#3b3a39" stroke-width="0.900" fill="none"/><path d="M1 10.500l3-4l2.500 2.500l5-5" stroke="#3b3a39" stroke-width="0.900" fill="none"/></svg>
<svg style="left:841.7px;top:178.4px" width="12" height="12" viewBox="0 0 12 12"><rect x="1.800" y="5.500" width="3" height="6" fill="#2b88d8"/><rect x="5" y="1.500" width="2.800" height="10" fill="#fff" stroke="#3b3a39" stroke-width="0.600"/><rect x="8.300" y="4" width="2.800" height="7.500" fill="#c8c6c4" stroke="#a19f9d" stroke-width="0.500"/><path d="M0.800 0.500v11h11.500" stroke="#3b3a39" stroke-width="0.900" fill="none"/><path d="M1 10.500l3.500-5l2.500 2l4.500-4.500" stroke="#3b3a39" stroke-width="0.900" fill="none"/></svg>
<svg style="left:862.6px;top:178.4px" width="12" height="12" viewBox="0 0 12 12"><path d="M0.800 0.500v11" stroke="#3b3a39" stroke-width="0.900"/><path d="M1 1.500l3 3.500l3-0.500l4.500-3.500v4l-4.500 3.500h-3l-3-2z" fill="#a19f9d"/><path d="M1 8h11v2.500h-11z" fill="#e8892f"/><path d="M1 5.500l3 3.500h3l4.500-4.500" stroke="#2b88d8" stroke-width="2.200" fill="none"/><path d="M0.500 11.600h11.500" stroke="#a19f9d" stroke-width="0.900"/></svg>
<svg style="left:757.9px;top:196.2px" width="12" height="12" viewBox="0 0 12 12"><rect x="1.800" y="3.500" width="2.500" height="8" fill="#fff" stroke="#3b3a39" stroke-width="0.600"/><rect x="4.300" y="7" width="3" height="4.500" fill="#fff" stroke="#a19f9d" stroke-width="0.600"/><rect x="7.300" y="1.500" width="1.800" height="6" fill="#2b88d8"/><rect x="9.100" y="1" width="2.500" height="10.500" fill="#c8c6c4" stroke="#3b3a39" stroke-width="0.600"/><path d="M0.800 0.500v11h11.500" stroke="#3b3a39" stroke-width="0.900" fill="none"/></svg>
<svg style="left:778.9px;top:196.2px" width="12" height="12" viewBox="0 0 12 12"><path d="M0 1h12l-1.500 3.300h-9z" fill="#2b88d8"/><path d="M1.800 5h8.400l-1.500 3h-5.400z" fill="#2b88d8"/><path d="M3.600 8.700h4.800v3h-4.800z" fill="#2b88d8"/></svg>
<svg style="left:799.8px;top:196.2px" width="12" height="12" viewBox="0 0 12 12"><path d="M0.800 0.500v11h11.500" stroke="#a19f9d" stroke-width="0.900" fill="none"/><circle cx="9.500" cy="2" r="1.100" fill="#3b3a39"/><circle cx="3" cy="9.500" r="1.100" fill="#3b3a39"/><circle cx="3.300" cy="3.500" r="0.900" fill="#7db8ec"/><circle cx="6.500" cy="5.500" r="1" fill="#7db8ec"/><circle cx="10" cy="8" r="1.100" fill="#7db8ec"/></svg>
<svg style="left:820.8px;top:196.2px" width="12" height="12" viewBox="0 0 12 12"><circle cx="6" cy="6" r="5.600" fill="#fff" stroke="#3b3a39" stroke-width="0.800"/><path d="M6 6v-5.600a5.600 5.600 0 0 1 4.600 8.800z" fill="#7db8ec" stroke="#2b88d8" stroke-width="0.500"/></svg>
<svg style="left:841.7px;top:196.2px" width="12" height="12" viewBox="0 0 12 12"><circle cx="6" cy="6" r="4" fill="none" stroke="#2b88d8" stroke-width="3.200"/><path d="M6 0.400v3.200M1 8.500l2.800-1.400" stroke="#fff" stroke-width="0.700"/></svg>
<svg style="left:862.6px;top:196.2px" width="12" height="12" viewBox="0 0 12 12"><rect x="0.500" y="0.500" width="5.500" height="5.500" fill="#2b88d8"/><rect x="0.500" y="6.500" width="5.500" height="5" fill="#2b88d8"/><rect x="6.500" y="0.500" width="5" height="3" fill="#fff" stroke="#3b3a39" stroke-width="0.600"/><rect x="6.500" y="3.800" width="2.500" height="7.700" fill="#fff" stroke="#3b3a39" stroke-width="0.600"/><rect x="9.300" y="3.800" width="2.200" height="3.500" fill="#fff" stroke="#3b3a39" stroke-width="0.600"/><rect x="9.300" y="7.600" width="2.200" height="3.900" fill="#fff" stroke="#3b3a39" stroke-width="0.600"/></svg>
<svg style="left:757.9px;top:214.0px" width="12" height="12" viewBox="0 0 12 12"><path d="M2.500 12h7" stroke="#a19f9d" stroke-width="0.800"/><circle cx="6" cy="5.800" r="4.800" fill="#3b3a39" stroke="#3b3a39" stroke-width="1"/><path d="M4 3.500l2-1.500l2.500 1l0.500 2.500l-1.500 0.500v2.500l-2.500 0.500l-1.500-2.500z" fill="#3fae5a"/><path d="M5.500 5h1.500v1.500h-1.500z" fill="#fff"/></svg>
<svg style="left:778.9px;top:214.0px" width="12" height="12" viewBox="0 0 12 12"><path d="M0.800 1l4 0.500l2.500-0.800l4.200 0.300v6l-3 3l-2.500 1.500l-3.500-2l-1.700-3.500z" fill="#c8c6c4" stroke="#3b3a39" stroke-width="0.700"/><path d="M0.800 1l3.500 0.500v3h-3.500z" fill="#2b88d8"/><path d="M6.500 6l5-1v2.500l-3 3l-2.500 1.200z" fill="#2b88d8"/></svg>
<svg style="left:799.8px;top:214.0px" width="12" height="12" viewBox="0 0 12 12"><path d="M1 9a5 5 0 0 1 4.500-5" stroke="#3b3a39" stroke-width="1.600" fill="none"/><path d="M5.500 4a5 5 0 0 1 5.500 5" stroke="#2b88d8" stroke-width="2.200" fill="none"/><path d="M6 9l2-3" stroke="#3b3a39" stroke-width="0.900"/></svg>
<svg style="left:820.8px;top:214.0px" width="12" height="12" viewBox="0 0 12 12"><rect x="0.500" y="1.500" width="11" height="9" fill="#c8c6c4" stroke="#3b3a39" stroke-width="0.800"/><rect x="1.800" y="3" width="8.400" height="5.500" fill="#7db8ec"/><text x="6" y="7.800" font-size="4.500" fill="#fff" text-anchor="middle" font-family="Liberation Sans" font-weight="bold">123</text></svg>
<svg style="left:841.7px;top:214.0px" width="12" height="12" viewBox="0 0 12 12"><rect x="0.800" y="0.500" width="10.500" height="11" fill="#fff" stroke="#3b3a39" stroke-width="0.800"/><path d="M1.800 1v10" stroke="#a19f9d" stroke-width="0.800"/><path d="M3.500 3.200h6M3.500 7h6" stroke="#2b88d8" stroke-width="1.200"/><path d="M3.500 5h3.500M3.500 8.800h3.500" stroke="#a19f9d" stroke-width="0.800"/></svg>
<svg style="left:862.6px;top:214.0px" width="12" height="12" viewBox="0 0 12 12"><rect x="0.500" y="1" width="11" height="10" fill="#fff" stroke="#3b3a39" stroke-width="0.800"/><path d="M0.500 8.500h11" stroke="#a19f9d" stroke-width="1.600"/><path d="M1.800 6.500l2-3.500l2 3.500z" fill="#3fae5a"/><path d="M6.500 3l4 0l-2 3.500z" fill="#d64554"/></svg>
<svg style="left:757.9px;top:232.0px" width="12" height="12" viewBox="0 0 12 12"><rect x="0.500" y="0.500" width="10.500" height="10.500" fill="#fff" stroke="#3b3a39" stroke-width="0.800"/><path d="M0.500 2.800h10.500" stroke="#3b3a39" stroke-width="0.800"/><path d="M2 5h2M2 7h2M2 9h2" stroke="#a19f9d" stroke-width="1.200"/><path d="M5.500 6.500h6.500l-2.500 3v2.500h-1.500v-2.500z" fill="#fff" stroke="#3b3a39" stroke-width="0.800"/></svg>
<svg style="left:778.9px;top:232.0px" width="12" height="12" viewBox="0 0 12 12"><rect x="0.500" y="0.500" width="11" height="11" fill="#fff" stroke="#3b3a39" stroke-width="0.800"/><path d="M0.500 2.800h11" stroke="#3b3a39" stroke-width="1.400"/><path d="M0.500 5.700h11M0.500 8.600h11M4.200 2v9.500M7.800 2v9.500" stroke="#a19f9d" stroke-width="0.700"/></svg>
<svg style="left:799.8px;top:232.0px" width="12" height="12" viewBox="0 0 12 12"><rect x="0.500" y="0.500" width="11" height="11" fill="#fff" stroke="#3b3a39" stroke-width="0.800"/><rect x="0.500" y="6" width="11" height="5.500" fill="#2b88d8"/><rect x="7.800" y="2" width="3.700" height="9.500" fill="#2b88d8"/><path d="M0.500 2.800h11" stroke="#3b3a39" stroke-width="1.400"/><path d="M0.500 5.700h11M0.500 8.600h11M4.200 2v9.500M7.800 2v9.500" stroke="#d7e9f9" stroke-width="0.600"/></svg>
<svg style="left:820.8px;top:232.0px" width="12" height="12" viewBox="0 0 12 12"><text x="5.500" y="10.600" font-size="11" fill="#2b88d8" text-anchor="middle" font-family="Liberation Sans" font-weight="bold">R</text></svg>
<svg style="left:841.7px;top:232.0px" width="12" height="12" viewBox="0 0 12 12"><text x="6" y="9.300" font-size="10.800" fill="#2b88d8" text-anchor="middle" font-family="Liberation Sans" font-weight="bold" letter-spacing="-0.500">Py</text></svg>
<svg style="left:862.6px;top:232.0px" width="12" height="12" viewBox="0 0 12 12"><path d="M0.800 0.500v11h11.500" stroke="#3b3a39" stroke-width="0.900" fill="none"/><path d="M1 2.500h8" stroke="#2b88d8" stroke-width="1"/><circle cx="10" cy="2.500" r="1.300" fill="#fff" stroke="#2b88d8" stroke-width="0.900"/><path d="M1 5.500h6M1 8.300h4" stroke="#3b3a39" stroke-width="0.900"/><circle cx="7.300" cy="5.500" r="0.800" fill="#3b3a39"/><circle cx="5.300" cy="8.300" r="0.800" fill="#3b3a39"/></svg>
<svg style="left:757.9px;top:250.0px" width="12" height="12" viewBox="0 0 12 12"><rect x="0" y="4.500" width="4.500" height="3" fill="#2b88d8"/><path d="M4.500 6h2M6.500 1.500v9M6.500 1.500h1.500M6.500 10.500h1.500" stroke="#3b3a39" stroke-width="0.800" fill="none"/><rect x="8" y="0.200" width="3.800" height="3" fill="#2b88d8"/><rect x="8" y="4.500" width="3.800" height="3" fill="#2b88d8"/><rect x="8" y="8.800" width="3.800" height="3" fill="#2b88d8"/></svg>
<svg style="left:778.9px;top:250.0px" width="12" height="12" viewBox="0 0 12 12"><path d="M0.800 1h10.500v7.500h-6l-2.500 2.800v-2.800h-2z" fill="#fff" stroke="#2b88d8" stroke-width="1"/></svg>
<svg style="left:799.8px;top:250.0px" width="12" height="12" viewBox="0 0 12 12"><path d="M2 0.800h6l3 3v7.700h-9z" fill="#fff" stroke="#3b3a39" stroke-width="0.800"/><path d="M8 0.800v3h3" stroke="#3b3a39" stroke-width="0.800" fill="none"/><path d="M0.500 5h4" stroke="#2b88d8" stroke-width="1.400"/><path d="M4.500 7h5M4.500 9h4" stroke="#7db8ec" stroke-width="1"/></svg>
<svg style="left:820.8px;top:250.0px" width="12" height="12" viewBox="0 0 12 12"><rect x="1" y="1" width="10.500" height="10.500" fill="#fff" stroke="#2b88d8" stroke-width="1"/><path d="M3 11l3-5l3-1l2-3" stroke="#2b88d8" stroke-width="1.800" fill="none"/><path d="M0 0h3.500v4.500l-1.700 2l-1.800-2z" fill="#e8892f"/><circle cx="11" cy="10.500" r="1.600" fill="#e8892f"/><circle cx="11.500" cy="6.500" r="1" fill="#e8892f"/></svg>
<svg style="left:841.7px;top:250.0px" width="12" height="12" viewBox="0 0 12 12"><path d="M6 -0.500l7 6.500l-7 6.500l-7-6.500z" fill="#fff" stroke="#3b3a39" stroke-width="1"/><path d="M2.500 2.800l7 6.400M9.500 2.800l-7 6.400" stroke="#3b3a39" stroke-width="0.900"/></svg>
<svg style="left:862.6px;top:250.0px" width="12" height="12" viewBox="0 0 12 12"><rect x="1" y="5.200" width="1.600" height="1.600" fill="#2b88d8"/><rect x="5.400" y="5.200" width="1.600" height="1.600" fill="#e8892f"/><rect x="9.800" y="5.200" width="1.600" height="1.600" fill="#2b88d8"/></svg>
<div class="a" style="left:757px;top:264.500px;width:127px;height:1px;background:#e1dfdd"></div>
<svg style="left:770px;top:272px" width="16" height="15" viewBox="0 0 16 15" fill="none" stroke="#3b3a39" stroke-width="0.900">
<path d="M0.500 1h15" stroke-width="1.600"/><rect x="0.500" y="3.500" width="15" height="10.500" stroke-dasharray="1.200 1"/><path d="M0.500 7h15M0.500 10.500h15" stroke-dasharray="1.200 1"/></svg>
<div class="a" style="left:762.500px;top:290.200px;width:30px;height:2.800px;background:#f2c811;border-radius:1px"></div>
<svg style="left:800px;top:272px" width="15" height="16" viewBox="0 0 15 16" fill="none" stroke="#3b3a39" stroke-width="1.100">
<rect x="1" y="0.800" width="10.500" height="4" rx="1"/><path d="M11.500 2.800h2v4.500h-6v2.200"/><rect x="6.200" y="9.500" width="2.600" height="5.500"/></svg>
<svg style="left:829px;top:272px" width="17" height="16" viewBox="0 0 17 16" fill="none" stroke="#3b3a39" stroke-width="1">
<circle cx="7" cy="6.800" r="5.800"/><path d="M11.200 11l4.800 4.500" stroke-width="1.400"/><path d="M2 8.500l2.500-2.500l2 1.500l2.500-3l2.500 2" stroke-width="0.800"/><path d="M3.500 8v3M5.500 8.500v3.500M7.500 8v4M9.500 7v4" stroke-width="0.700"/></svg>
<div class="t wl" style="top:300px">Axis</div>
<div class="a" style="left:756.500px;top:314px;width:127px;height:26.5px;border:1px dashed #cfcdcb;background:#fff"></div>
<div class="a" style="left:759px;top:316.5px;width:122.500px;height:16.500px;border:1px solid #c8c6c4;border-radius:2px;background:#edebe9"></div>
<div class="t" style="left:763px;top:321.2px;font-size:9.200px;color:#3b3a39">Month Name</div>
<svg style="left:858px;top:322.0px" width="21" height="7" viewBox="0 0 21 7" fill="none" stroke="#3b3a39" stroke-width="0.900"><path d="M0.800 0.800l3.700 4l3.700-4M13.800 0.300l6 6M19.800 0.300l-6 6"/></svg>
<div class="t wl" style="top:351px">Legend</div>
<div class="a" style="left:756.500px;top:366px;width:127px;height:21px;border:1px dashed #cfcdcb;background:#fff"></div>
<div class="a" style="left:759px;top:368.5px;width:122.500px;height:16.500px;border:1px solid #c8c6c4;border-radius:2px;background:#edebe9"></div>
<div class="t" style="left:763px;top:373.2px;font-size:9.200px;color:#3b3a39">Country</div>
<svg style="left:858px;top:374.0px" width="21" height="7" viewBox="0 0 21 7" fill="none" stroke="#3b3a39" stroke-width="0.900"><path d="M0.800 0.800l3.700 4l3.700-4M13.800 0.300l6 6M19.800 0.300l-6 6"/></svg>
<div class="t wl" style="top:397.3px">Values</div>
<div class="a" style="left:756.500px;top:412.5px;width:127px;height:21px;border:1px dashed #cfcdcb;background:#fff"></div>
<div class="a" style="left:759px;top:415.0px;width:122.500px;height:16.500px;border:1px solid #c8c6c4;border-radius:2px;background:#edebe9"></div>
<div class="t" style="left:763px;top:419.7px;font-size:9.200px;color:#3b3a39">Profit</div>
<svg style="left:858px;top:420.5px" width="21" height="7" viewBox="0 0 21 7" fill="none" stroke="#3b3a39" stroke-width="0.900"><path d="M0.800 0.800l3.700 4l3.700-4M13.800 0.300l6 6M19.800 0.300l-6 6"/></svg>
<div class="t wl" style="top:444px">Small multiples</div>
<div class="a" style="left:756.500px;top:458.5px;width:127px;height:20px;border:1px dashed #cfcdcb;background:#fff"></div>
<div class="t" style="left:764.500px;top:464.5px;font-size:9.200px;color:#3b3a39">Add data fields here</div>
<div class="t wl" style="top:489px">Tooltips</div>
<div class="a" style="left:756.500px;top:503.5px;width:127px;height:20px;border:1px dashed #cfcdcb;background:#fff"></div>
<div class="t" style="left:764.500px;top:509.5px;font-size:9.200px;color:#3b3a39">Add data fields here</div>
<div class="a" style="left:884.500px;top:293px;width:4px;height:143px;background:#c8c6c4;border-radius:2px"></div>
<!-- FIELDS PANE -->
<div class="a" style="left:889px;top:122px;width:135px;height:406px;background:#f3f2f1"></div>
<div class="a" style="left:888.500px;top:122px;width:1px;height:406px;background:#d2d0ce"></div>
<div class="t" style="left:898px;top:135.200px;font-size:11px;font-weight:bold;color:#55524f">Fields</div>
<svg style="left:1008.500px;top:133px" width="8" height="11" viewBox="0 0 8 11" fill="none" stroke="#605e5c" stroke-width="1.100"><path d="M1.800 1l4.200 4.500l-4.200 4.500"/></svg>
<div class="a" style="left:892px;top:157px;width:129px;height:21px;border:1px solid #8a8886;border-radius:2px;background:#fff"></div>
<svg style="left:898px;top:162px" width="12" height="12" viewBox="0 0 13 13" fill="none" stroke="#3b3a39" stroke-width="1"><circle cx="7.800" cy="5" r="3.600"/><path d="M5.200 7.600l-4 4"/></svg>
<div class="t" style="left:914px;top:164.200px;font-size:9.600px;color:#323130">Search</div>
<div class="a" style="left:889px;top:182.500px;width:135px;height:1px;background:#d2d0ce"></div>
<svg style="left:894px;top:195px" width="9" height="7" viewBox="0 0 9 7" fill="none" stroke="#605e5c" stroke-width="0.900"><path d="M0.800 1l3.700 4l3.700-4"/></svg>
<svg style="left:905px;top:193px" width="14" height="14" viewBox="0 0 14 14" fill="none" stroke="#3b3a39" stroke-width="0.800">
<rect x="0.500" y="0.800" width="10.500" height="8.500" fill="#fff"/><path d="M0.500 2.300h10.500" stroke-width="1.400"/><path d="M0.500 4.800h10.500M0.500 7h10.500M4 1.500v7.800M7.500 1.500v7.800"/>
<circle cx="10.200" cy="9.900" r="4.200" fill="#f2c811" stroke="none"/><path d="M8.300 9.900l1.400 1.500l2.500-2.900" stroke="#252423" stroke-width="1"/></svg>
<div class="t fl" style="left:920.500px;top:195.400px">financials</div>
<div class="a" style="left:917.500px;top:212.5px;width:9.200px;height:8.800px;background:#f8f7f6;border:1px solid #a19f9d;border-radius:2px"></div>
<svg style="left:930px;top:211.7px" width="9" height="10" viewBox="0 0 9 10" fill="none" stroke="#3b3a39" stroke-width="0.900"><path d="M8 2v-1.300h-7.200l4 4.100l-4 4.200h7.200v-1.300"/></svg>
<div class="t fl" style="left:943px;top:213.4px">Sales</div>
<div class="a" style="left:917.500px;top:230.5px;width:9.200px;height:8.800px;background:#f8f7f6;border:1px solid #a19f9d;border-radius:2px"></div>
<svg style="left:930px;top:229.7px" width="9" height="10" viewBox="0 0 9 10" fill="none" stroke="#3b3a39" stroke-width="0.900"><path d="M8 2v-1.300h-7.200l4 4.100l-4 4.200h7.200v-1.300"/></svg>
<div class="t fl" style="left:943px;top:231.4px">COGS</div>
<div class="a" style="left:917.500px;top:248.5px;width:9.200px;height:8.800px;background:#f2c811;border-radius:2px"></div>
<svg style="left:917.500px;top:248.5px" width="9.200" height="8.800" viewBox="0 0 9.200 8.800" fill="none" stroke="#5a4d12" stroke-width="0.850"><path d="M2.300 4.500l1.700 1.700l3.100-3.500"/></svg>
<div class="t fl" style="left:943px;top:249.4px">Country</div>
<div class="a" style="left:917.500px;top:266.5px;width:9.200px;height:8.800px;background:#f8f7f6;border:1px solid #a19f9d;border-radius:2px"></div>
<svg style="left:908px;top:267.5px" width="6" height="8" viewBox="0 0 6 8" fill="none" stroke="#605e5c" stroke-width="0.900"><path d="M1 0.800l3.500 3.200l-3.500 3.200"/></svg>
<svg style="left:928.500px;top:266.5px" width="12" height="10" viewBox="0 0 12 10" fill="none" stroke="#3b3a39" stroke-width="0.800"><rect x="0.500" y="0.800" width="11" height="8.700"/><path d="M0.500 2.500h11" stroke-width="1.300"/><path d="M2 4.700h8M2 6.500h8M2 8.200h5" stroke-dasharray="1 0.800" stroke-width="0.900"/></svg>
<div class="t fl" style="left:943px;top:267.4px">Date</div>
<div class="a" style="left:917.500px;top:284.5px;width:9.200px;height:8.800px;background:#f8f7f6;border:1px solid #a19f9d;border-radius:2px"></div>
<div class="t fl" style="left:943px;top:285.4px">Discount Band</div>
<div class="a" style="left:917.500px;top:302.5px;width:9.200px;height:8.800px;background:#f8f7f6;border:1px solid #a19f9d;border-radius:2px"></div>
<svg style="left:930px;top:301.7px" width="9" height="10" viewBox="0 0 9 10" fill="none" stroke="#3b3a39" stroke-width="0.900"><path d="M8 2v-1.300h-7.200l4 4.100l-4 4.200h7.200v-1.300"/></svg>
<div class="t fl" style="left:943px;top:303.4px">Discounts</div>
<div class="a" style="left:917.500px;top:320.5px;width:9.200px;height:8.800px;background:#f8f7f6;border:1px solid #a19f9d;border-radius:2px"></div>
<svg style="left:930px;top:319.7px" width="9" height="10" viewBox="0 0 9 10" fill="none" stroke="#3b3a39" stroke-width="0.900"><path d="M8 2v-1.300h-7.200l4 4.100l-4 4.200h7.200v-1.300"/></svg>
<div class="t fl" style="left:943px;top:321.4px">Gross Sales</div>
<div class="a" style="left:917.500px;top:338.5px;width:9.200px;height:8.800px;background:#f8f7f6;border:1px solid #a19f9d;border-radius:2px"></div>
<svg style="left:930px;top:337.7px" width="9" height="10" viewBox="0 0 9 10" fill="none" stroke="#3b3a39" stroke-width="0.900"><path d="M8 2v-1.300h-7.200l4 4.100l-4 4.200h7.200v-1.300"/></svg>
<div class="t fl" style="left:943px;top:339.4px">Manufacturing Pr...</div>
<div class="a" style="left:917.500px;top:356.5px;width:9.200px;height:8.800px;background:#f2c811;border-radius:2px"></div>
<svg style="left:917.500px;top:356.5px" width="9.200" height="8.800" viewBox="0 0 9.200 8.800" fill="none" stroke="#5a4d12" stroke-width="0.850"><path d="M2.300 4.500l1.700 1.700l3.100-3.500"/></svg>
<div class="t fl" style="left:943px;top:357.4px">Month Name</div>
<div class="a" style="left:917.500px;top:374.5px;width:9.200px;height:8.800px;background:#f8f7f6;border:1px solid #a19f9d;border-radius:2px"></div>
<svg style="left:930px;top:373.7px" width="9" height="10" viewBox="0 0 9 10" fill="none" stroke="#3b3a39" stroke-width="0.900"><path d="M8 2v-1.300h-7.200l4 4.100l-4 4.200h7.200v-1.300"/></svg>
<div class="t fl" style="left:943px;top:375.4px">Month Number</div>
<div class="a" style="left:917.500px;top:392.5px;width:9.200px;height:8.800px;background:#f8f7f6;border:1px solid #a19f9d;border-radius:2px"></div>
<div class="t fl" style="left:943px;top:393.4px">Product</div>
<div class="a" style="left:917.500px;top:410.5px;width:9.200px;height:8.800px;background:#f2c811;border-radius:2px"></div>
<svg style="left:917.500px;top:410.5px" width="9.200" height="8.800" viewBox="0 0 9.200 8.800" fill="none" stroke="#5a4d12" stroke-width="0.850"><path d="M2.300 4.500l1.700 1.700l3.100-3.500"/></svg>
<svg style="left:930px;top:409.7px" width="9" height="10" viewBox="0 0 9 10" fill="none" stroke="#3b3a39" stroke-width="0.900"><path d="M8 2v-1.300h-7.200l4 4.100l-4 4.200h7.200v-1.300"/></svg>
<div class="t fl" style="left:943px;top:411.4px">Profit</div>
<div class="a" style="left:917.500px;top:428.5px;width:9.200px;height:8.800px;background:#f8f7f6;border:1px solid #a19f9d;border-radius:2px"></div>
<svg style="left:930px;top:427.7px" width="9" height="10" viewBox="0 0 9 10" fill="none" stroke="#3b3a39" stroke-width="0.900"><path d="M8 2v-1.300h-7.200l4 4.100l-4 4.200h7.200v-1.300"/></svg>
<div class="t fl" style="left:943px;top:429.4px">Sale Price</div>
<div class="a" style="left:917.500px;top:446.5px;width:9.200px;height:8.800px;background:#f8f7f6;border:1px solid #a19f9d;border-radius:2px"></div>
<div class="t fl" style="left:943px;top:447.4px">Segment</div>
<div class="a" style="left:917.500px;top:464.5px;width:9.200px;height:8.800px;background:#f8f7f6;border:1px solid #a19f9d;border-radius:2px"></div>
<svg style="left:930px;top:463.7px" width="9" height="10" viewBox="0 0 9 10" fill="none" stroke="#3b3a39" stroke-width="0.900"><path d="M8 2v-1.300h-7.200l4 4.100l-4 4.200h7.200v-1.300"/></svg>
<div class="t fl" style="left:943px;top:465.4px">Units Sold</div>
<div class="a" style="left:917.500px;top:482.5px;width:9.200px;height:8.800px;background:#f8f7f6;border:1px solid #a19f9d;border-radius:2px"></div>
<svg style="left:930px;top:481.7px" width="9" height="10" viewBox="0 0 9 10" fill="none" stroke="#3b3a39" stroke-width="0.900"><path d="M8 2v-1.300h-7.200l4 4.100l-4 4.200h7.200v-1.300"/></svg>
<div class="t fl" style="left:943px;top:483.4px">Year</div>
<!-- BOTTOM -->
<div class="a" style="left:30.500px;top:501px;width:1px;height:26px;background:#e1dfdd"></div>
<div class="a" style="left:31px;top:501px;width:722px;height:27px;background:#f3f2f1"></div>
<div class="a" style="left:0;top:527px;width:1024px;height:1px;background:#e1dfdd"></div>
<div class="a" style="left:0;top:528px;width:1024px;height:19px;background:#f3f2f1"></div>
<svg style="left:34px;top:511px" width="24" height="8" viewBox="0 0 24 8" fill="#c8c6c4"><path d="M4.500 0.500v7l-3.500-3.500zM17.500 0.500v7l3.500-3.500z"/></svg>
<div class="a" style="left:60.500px;top:501px;width:57px;height:26.500px;background:#fff;border-left:1px solid #c8c6c4"></div>
<div class="a" style="left:60.500px;top:524.500px;width:57px;height:2.500px;background:#f2c811"></div>
<div class="t" style="left:76px;top:510px;font-size:9.500px;font-weight:bold;color:#323130;letter-spacing:-0.600px">Page 1</div>
<div class="a" style="left:117.500px;top:503px;width:29.500px;height:24px;background:#f2c811"></div>
<svg style="left:128px;top:511px" width="9" height="9" viewBox="0 0 9 9" stroke="#605e5c" stroke-width="1.900"><path d="M4.500 0.500v8M0.500 4.500h8"/></svg>
<div class="t" style="left:4px;top:532.300px;font-size:9.300px;letter-spacing:-0.300px;color:#605e5c">Page 1 of 1</div>
<div class="a" style="left:0;top:545px;width:36px;height:2px;background:#1f1f1f"></div>
<div class="a" style="left:294px;top:545px;width:730px;height:2px;background:#2d3538"></div>
<div class="a" style="left:514px;top:545px;width:37px;height:2px;background:#8a8f90"></div>
<!-- OVERLAYS -->
<svg style="left:0;top:0" width="1024" height="547" viewBox="0 0 1024 547" fill="none" stroke="#e81123" stroke-width="2.400">
<rect x="150.400" y="45.700" width="47.800" height="74.600"/>
<rect x="713.400" y="41.500" width="60.400" height="69.400"/>
<rect x="897.500" y="236.400" width="109.600" height="27.800" stroke-width="2.100"/>
<rect x="891.400" y="348.900" width="127.400" height="24" stroke-width="2.100"/>
<rect x="888.900" y="401.600" width="134.300" height="27.100" stroke-width="2.200"/>
</svg>
<!-- tooltip -->
<div class="a" style="left:638px;top:111px;width:212px;height:19px;background:#fff;border:1px solid #c8c6c4;box-shadow:0 1px 3px rgba(0,0,0,.18)"></div>
<svg style="left:739px;top:107px" width="11" height="6" viewBox="0 0 11 6"><path d="M0.500 5.500l5-5l5 5" fill="#fff" stroke="#d2d0ce" stroke-width="0.800"/><path d="M0.500 6h10" stroke="#fff" stroke-width="1.500"/></svg>
<div class="t" style="left:648px;top:116.500px;font-size:9.100px;color:#3b3a39;letter-spacing:-0.130px">Publish this report online in the Power BI service.</div>
</body></html>
